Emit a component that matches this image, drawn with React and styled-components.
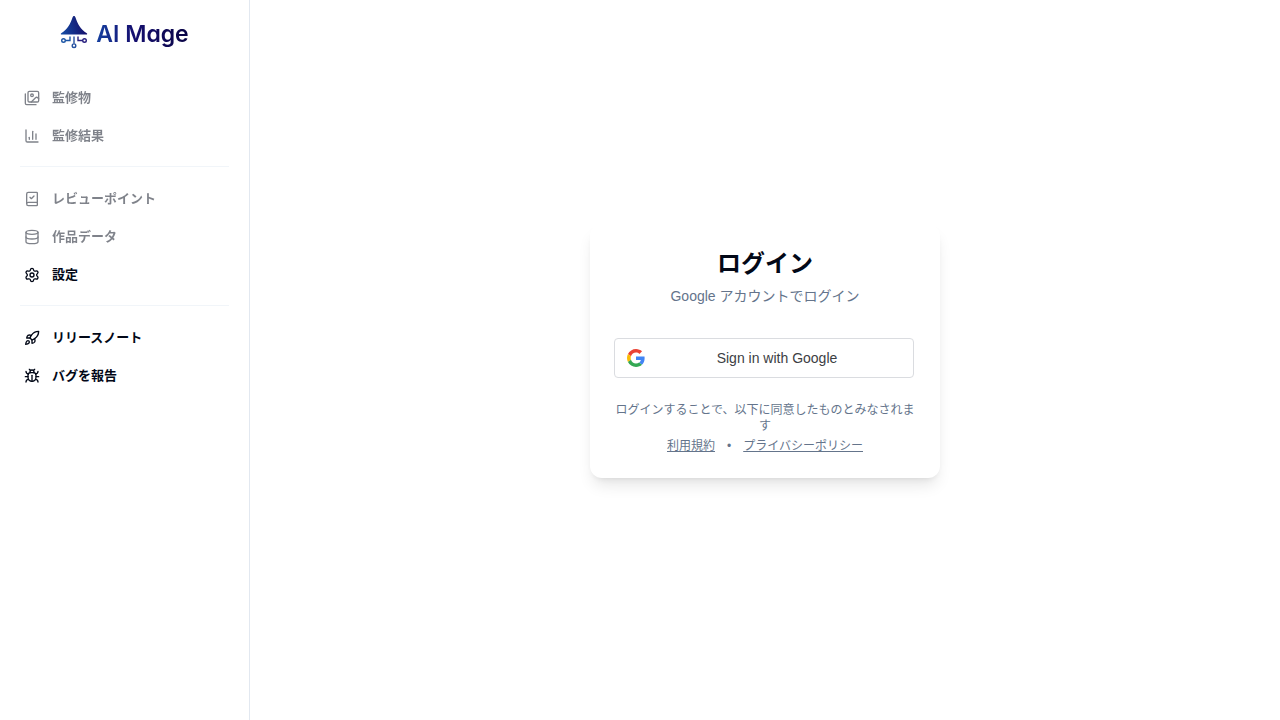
import styled, { createGlobalStyle } from "styled-components";
import {
  BookCheck,
  Bug,
  ChartColumn,
  Database,
  Rocket,
  Settings,
} from "lucide-react";

const groups = [
  [
    { label: "監修物", icon: ImagesIcon, disabled: true },
    { label: "監修結果", icon: ChartColumn, disabled: true },
  ],
  [
    { label: "レビューポイント", icon: BookCheck, disabled: true },
    { label: "作品データ", icon: Database, disabled: true },
    { label: "設定", icon: Settings },
  ],
  [
    { label: "リリースノート", icon: Rocket },
    { label: "バグを報告", icon: Bug },
  ],
];

export default function App() {
  return (
    <Layout>
      <GlobalStyle />
      <Sidebar>
        <Logo href="#">
          <LogoMark />
          <LogoText>AI Mage</LogoText>
        </Logo>
        <nav>
          {groups.map((items) => (
            <NavGroup key={items[0].label}>
              {items.map(({ label, icon: Icon, disabled }) => (
                <li key={label}>
                  <NavButton type="button" disabled={disabled}>
                    <Icon size={16} />
                    {label}
                  </NavButton>
                </li>
              ))}
            </NavGroup>
          ))}
        </nav>
      </Sidebar>
      <Main>
        <LoginCard />
      </Main>
    </Layout>
  );
}

function LoginCard() {
  return (
    <Card>
      <Title>ログイン</Title>
      <Description>Google アカウントでログイン</Description>
      <GoogleButton type="button">
        <GoogleIcon />
        <GoogleLabel>Sign in with Google</GoogleLabel>
      </GoogleButton>
      <Terms>ログインすることで、以下に同意したものとみなされます</Terms>
      <TermsLinks>
        <a href="#terms">利用規約</a>
        <span>•</span>
        <a href="#privacy">プライバシーポリシー</a>
      </TermsLinks>
    </Card>
  );
}

function LogoMark() {
  return (
    <svg width="28" height="34" viewBox="0 0 28 34" fill="none" aria-hidden="true">
      <defs>
        <linearGradient id="hat" x1="0" y1="20" x2="26" y2="14" gradientUnits="userSpaceOnUse">
          <stop stopColor="#1450a8" />
          <stop offset="1" stopColor="#150f6b" />
        </linearGradient>
      </defs>
      <path
        d="M14 1c-.8 0-1.200.6-1.500 1.500C10.500 8.500 7.500 14.500 1.200 18.200c-.7.500-.5 1.300.3 1.300h25c.8 0 1-.8.3-1.300C20.500 14.500 17.500 8.500 15.500 2.500 15.200 1.600 14.800 1 14 1Z"
        fill="url(#hat)"
      />
      <g strokeWidth="1.400">
        <path d="M5.500 25.500H10V21.500" stroke="#1c55a5" />
        <circle cx="3.500" cy="25.500" r="1.800" stroke="#1c55a5" />
        <path d="M14 21.500v7" stroke="#2450a0" />
        <circle cx="14" cy="30.700" r="1.800" stroke="#2450a0" />
        <path d="M18 21.500v4h4.500" stroke="#29207f" />
        <circle cx="24.500" cy="25.500" r="1.800" stroke="#29207f" />
      </g>
    </svg>
  );
}

function ImagesIcon({ size }) {
  return (
    <svg
      width={size}
      height={size}
      viewBox="0 0 24 24"
      fill="none"
      stroke="currentColor"
      strokeWidth="2"
      strokeLinecap="round"
      strokeLinejoin="round"
      aria-hidden="true"
    >
      <path d="M18 22H4a2 2 0 0 1-2-2V6" />
      <path d="m22 13-1.296-1.296a2.410 2.410 0 0 0-3.408 0L11 18" />
      <circle cx="12" cy="8" r="2" />
      <rect width="16" height="16" x="6" y="2" rx="2" />
    </svg>
  );
}

function GoogleIcon() {
  return (
    <svg width="18" height="18" viewBox="0 0 48 48" aria-hidden="true">
      <path fill="#EA4335" d="M24 9.500c3.540 0 6.710 1.220 9.210 3.600l6.850-6.850C35.900 2.380 30.470 0 24 0 14.620 0 6.510 5.380 2.560 13.220l7.980 6.190C12.430 13.720 17.740 9.500 24 9.500z" />
      <path fill="#4285F4" d="M46.980 24.550c0-1.570-.15-3.090-.38-4.550H24v9.020h12.940c-.58 2.960-2.260 5.480-4.780 7.180l7.730 6c4.510-4.180 7.090-10.360 7.090-17.650z" />
      <path fill="#FBBC05" d="M10.530 28.590c-.48-1.450-.76-2.990-.76-4.590s.27-3.140.76-4.590l-7.980-6.190C.92 16.460 0 20.120 0 24c0 3.880.92 7.540 2.560 10.780l7.970-6.190z" />
      <path fill="#34A853" d="M24 48c6.480 0 11.930-2.130 15.890-5.810l-7.730-6c-2.150 1.450-4.920 2.300-8.160 2.300-6.260 0-11.570-4.220-13.470-9.910l-7.980 6.190C6.510 42.620 14.620 48 24 48z" />
    </svg>
  );
}

const GlobalStyle = createGlobalStyle`
  *,
  *::before,
  *::after {
    box-sizing: border-box;
  }
  body {
    margin: 0;
    color: #020817;
    background: #fff;
    font-family: "Liberation Sans", "Noto Sans CJK JP", sans-serif;
  }
`;

const Layout = styled.div`
  display: flex;
  min-height: 100vh;
`;

const Sidebar = styled.aside`
  flex: 0 0 250px;
  padding: 14px 12px;
  border-right: 1px solid #e2e8f0;
`;

const Logo = styled.a`
  display: flex;
  align-items: center;
  justify-content: center;
  gap: 8px;
  height: 36px;
  margin-bottom: 30px;
  text-decoration: none;
`;

const LogoText = styled.span`
  padding-top: 4px;
  font-family: Inter, sans-serif;
  font-size: 23px;
  line-height: 28px;
  font-weight: 600;
  font-feature-settings: "cv11";
  color: transparent;
  background: linear-gradient(to right, #1540a0, #150f70 40%, #0a0545);
  background-clip: text;
`;

const NavGroup = styled.ul`
  display: grid;
  gap: 2px;
  margin: 0;
  padding: 0;
  list-style: none;

  & + &::before {
    content: "";
    height: 1px;
    margin: 12px 8px;
    background: #f1f5f9;
  }
`;

const NavButton = styled.button`
  display: flex;
  align-items: center;
  gap: 12px;
  width: 100%;
  height: 36px;
  padding: 0 12px;
  border: none;
  border-radius: 6px;
  background: none;
  color: inherit;
  font: inherit;
  font-size: 13px;
  line-height: 16px;
  font-weight: 700;
  cursor: pointer;
  &:disabled {
    opacity: 0.5;
    cursor: default;
  }
  &:hover:enabled {
    background: #f1f5f9;
  }
`;

const Main = styled.main`
  flex: 1;
  display: flex;
  align-items: center;
  justify-content: center;
  padding-bottom: 18px;
`;

const Card = styled.section`
  width: 350px;
  padding: 24px;
  border-radius: 12px;
  background: #fff;
  text-align: center;
  box-shadow:
    0 10px 15px -3px rgba(0, 0, 0, 0.1),
    0 4px 6px -4px rgba(0, 0, 0, 0.1);
`;

const Title = styled.h1`
  margin: 0 0 6px;
  font-size: 24px;
  line-height: 32px;
`;

const Description = styled.p`
  margin: 0 0 32px;
  font-size: 14px;
  line-height: 20px;
  color: #64748b;
`;

const GoogleButton = styled.button`
  display: flex;
  align-items: center;
  width: 300px;
  height: 40px;
  margin-bottom: 24px;
  padding: 0 12px;
  border: 1px solid #dadce0;
  border-radius: 4px;
  background: #fff;
  color: #3c4043;
  font: inherit;
  font-size: 14px;
  cursor: pointer;
  &:hover {
    background: #f8faff;
  }
`;

const GoogleLabel = styled.span`
  flex: 1;
  padding-left: 8px;
`;

const Terms = styled.p`
  margin: 0 0 4px;
  font-size: 12px;
  line-height: 16px;
  color: #64748b;
`;

const TermsLinks = styled.div`
  display: flex;
  justify-content: center;
  gap: 12px;
  font-size: 12px;
  line-height: 16px;
  color: #64748b;

  a {
    color: inherit;
  }
`;
